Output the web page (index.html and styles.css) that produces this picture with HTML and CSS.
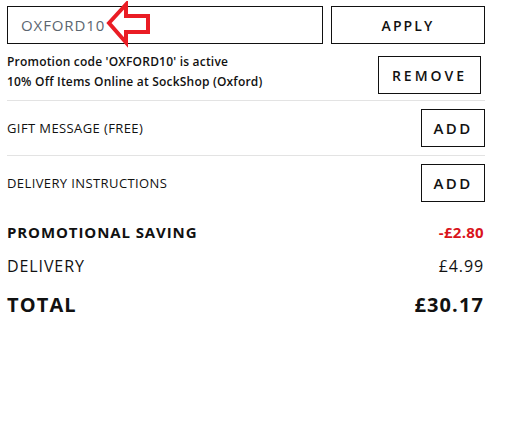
FILE: index.html
```html
<!DOCTYPE html>
<html>
<head>
<meta charset="utf-8">
<link rel="stylesheet" href="styles.css">
</head>
<body>
<div class="basket">
  <div class="promo-row">
    <div class="code-field">
      <span class="code-value">OXFORD10</span>
      <svg class="arrow" width="50" height="50" viewBox="0 0 50 50">
        <polygon points="3,22 20,3.5 20,15 42,15 42,31 20,31 20,41.5" fill="none" stroke="#ea1c24" stroke-width="4" stroke-linejoin="miter"/>
      </svg>
    </div>
    <button class="btn btn-apply">APPLY</button>
  </div>
  <div class="promo-status">
    <div class="status-text">
      <div>Promotion code 'OXFORD10' is active</div>
      <div>10% Off Items Online at SockShop (Oxford)</div>
    </div>
    <button class="btn btn-remove">REMOVE</button>
  </div>
  <div class="option-row first">
    <span class="option-label">GIFT MESSAGE (FREE)</span>
    <button class="btn btn-add">ADD</button>
  </div>
  <div class="option-row">
    <span class="option-label">DELIVERY INSTRUCTIONS</span>
    <button class="btn btn-add">ADD</button>
  </div>
  <div class="summary">
    <div class="sum-row saving">
      <span>PROMOTIONAL SAVING</span>
      <span class="neg">-£2.80</span>
    </div>
    <div class="sum-row delivery">
      <span>DELIVERY</span>
      <span>£4.99</span>
    </div>
    <div class="sum-row total">
      <span>TOTAL</span>
      <span>£30.17</span>
    </div>
  </div>
</div>
</body>
</html>
```
FILE: styles.css
```css
html, body {
  margin: 0;
  padding: 0;
  background: #fff;
}
body {
  font-family: "Open Sans", "Liberation Sans", sans-serif;
  color: #111;
}
.basket {
  width: 478px;
  padding: 6px 0 0 7px;
}
.promo-row {
  display: flex;
  gap: 8px;
  height: 38px;
}
.code-field {
  position: relative;
  box-sizing: border-box;
  width: 316px;
  height: 38px;
  border: 1px solid #111;
  display: flex;
  align-items: center;
  padding-left: 13px;
}
.code-value {
  font-size: 15px;
  color: #5c6670;
  letter-spacing: 0.9px;
}
.arrow {
  position: absolute;
  left: 98px;
  top: -6px;
}
.btn {
  box-sizing: border-box;
  height: 38px;
  border: 1px solid #111;
  background: #fff;
  color: #111;
  font-family: inherit;
  font-weight: 600;
  letter-spacing: 2.1px;
  padding: 0;
  cursor: pointer;
}
.btn-apply {
  width: 154px;
  font-size: 14px;
}
.promo-status {
  display: flex;
  justify-content: space-between;
  align-items: flex-start;
  margin-top: 8px;
  padding-right: 4px;
  padding-bottom: 6px;
  border-bottom: 1px solid #e3e3e3;
}
.status-text {
  font-size: 12px;
  font-weight: 600;
  line-height: 19.5px;
  letter-spacing: 0.2px;
}
.btn-remove {
  width: 103px;
  font-size: 14px;
  letter-spacing: 3px;
  margin-top: 4px;
}
.option-row {
  display: flex;
  justify-content: space-between;
  align-items: center;
  padding: 8px 0 8px;
}
.option-row.first {
  border-bottom: 1px solid #e3e3e3;
}
.option-label {
  font-size: 13px;
  letter-spacing: 0.4px;
}
.btn-add {
  width: 64px;
  font-size: 15px;
  letter-spacing: 2.4px;
}
.summary {
  margin-top: 12px;
}
.sum-row {
  display: flex;
  justify-content: space-between;
  align-items: center;
  padding-right: 1px;
}
.sum-row.saving {
  font-size: 15px;
  font-weight: 700;
  height: 20px;
  letter-spacing: 0.9px;
}
.neg {
  color: #d9141c;
  letter-spacing: 0.3px;
}
.sum-row.delivery {
  font-size: 16px;
  height: 20px;
  margin-top: 14px;
  letter-spacing: 0.9px;
}
.sum-row.total {
  font-size: 20px;
  font-weight: 700;
  height: 26px;
  margin-top: 15px;
  letter-spacing: 1.1px;
}
```
